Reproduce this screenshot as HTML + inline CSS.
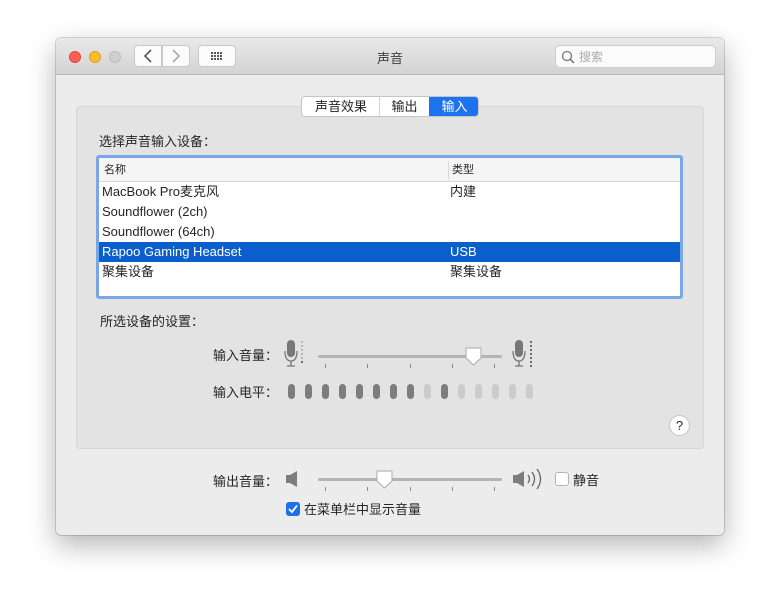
<!DOCTYPE html>
<html><head><meta charset="utf-8"><style>
*{margin:0;padding:0;box-sizing:border-box}
body{width:780px;height:610px;background:#fff;position:relative;overflow:hidden;font-family:"Liberation Sans","Noto Sans CJK SC",sans-serif;font-size:13px;color:#262626}
.a{position:absolute}
.win{left:56px;top:38px;width:668px;height:497px;background:#ececec;border-radius:5px;box-shadow:0 10px 28px rgba(0,0,0,.3),0 0 0 1px rgba(0,0,0,.15)}
.tb{left:0;top:0;width:668px;height:37px;background:linear-gradient(#e9e9e9,#d3d3d3);border-bottom:1px solid #b9b9b9;border-radius:5px 5px 0 0}
.dot{width:12px;height:12px;border-radius:50%;top:13px}
.btn{background:#fbfbfb;border:1px solid #c9c9c9;border-radius:4px;height:22px;top:7px}
.grp{left:20px;top:68px;width:628px;height:343px;background:#e3e3e3;border:1px solid #d6d6d6;border-radius:4px}
.row{position:absolute;left:0;width:584px;height:20px;line-height:20px}
.row span{position:absolute}
.bar{position:absolute;top:384px;width:7px;height:15px;border-radius:4px}
.tick{position:absolute;width:1px;height:4px;background:#888}
</style></head><body>
<div class="a win">
 <div class="a tb">
  <div class="a dot" style="left:13px;background:#fc5f57;border:1px solid #e0443e"></div>
  <div class="a dot" style="left:33px;background:#fdbc2e;border:1px solid #dea123"></div>
  <div class="a dot" style="left:53px;background:#d0d0d0;border:1px solid #bcbcbc"></div>
  <div class="a btn" style="left:78px;width:28px;border-radius:4px 0 0 4px"><svg width="26" height="20"><path d="M16 4 L10 10 L16 16" fill="none" stroke="#555" stroke-width="1.6"/></svg></div>
  <div class="a btn" style="left:106px;width:28px;border-radius:0 4px 4px 0"><svg width="26" height="20"><path d="M10 4 L16 10 L10 16" fill="none" stroke="#aaa" stroke-width="1.6"/></svg></div>
  <div class="a btn" style="left:142px;width:38px"><svg width="36" height="20"><g fill="#555"><rect x="12" y="6" width="2" height="2"/><rect x="15" y="6" width="2" height="2"/><rect x="18" y="6" width="2" height="2"/><rect x="21" y="6" width="2" height="2"/><rect x="12" y="9" width="2" height="2"/><rect x="15" y="9" width="2" height="2"/><rect x="18" y="9" width="2" height="2"/><rect x="21" y="9" width="2" height="2"/><rect x="12" y="12" width="2" height="2"/><rect x="15" y="12" width="2" height="2"/><rect x="18" y="12" width="2" height="2"/><rect x="21" y="12" width="2" height="2"/></g></svg></div>
  <div class="a" style="left:0;width:668px;top:10px;text-align:center;color:#404040">声音</div>
  <div class="a" style="left:499px;top:7px;width:161px;height:23px;background:#fbfbfb;border:1px solid #cdcdcd;border-radius:5px"><svg class="a" style="left:5px;top:4px" width="14" height="14"><circle cx="6" cy="6" r="4.5" fill="none" stroke="#777" stroke-width="1.3"/><path d="M9.3 9.3 L13 13" stroke="#777" stroke-width="1.5"/></svg><span class="a" style="left:23px;top:2px;color:#aaa;font-size:12px">搜索</span></div>
 </div>
 <div class="a grp"></div>
 <div class="a" style="left:245px;top:58px;width:178px;height:21px;background:#fff;border:1px solid #c6c6c6;border-radius:4px;overflow:hidden;line-height:19px">
  <span class="a" style="left:0;width:78px;text-align:center">声音效果</span>
  <span class="a" style="left:77px;top:0;width:1px;height:20px;background:#d4d4d4"></span>
  <span class="a" style="left:78px;width:49px;text-align:center">输出</span>
  <span class="a" style="left:127px;top:-1px;width:51px;height:21px;background:#1d72f0;color:#fff;text-align:center;line-height:21px">输入</span>
 </div>
 <div class="a" style="left:43px;top:93px">选择声音输入设备：</div>
 <div class="a" style="left:40px;top:117px;width:587px;height:144px;border:3px solid #78a6e6;border-radius:3px;background:#fff">
  <div class="a" style="left:0;top:0;width:581px;height:24px;background:#f5f5f5;border-bottom:1px solid #d8d8d8;font-size:11px;line-height:24px"><span class="a" style="left:5px">名称</span><span class="a" style="left:349px;top:3px;width:1px;height:18px;background:#d8d8d8"></span><span class="a" style="left:353px">类型</span></div>
  <div class="row" style="top:24px"><span style="left:3px">MacBook Pro麦克风</span><span style="left:351px">内建</span></div>
  <div class="row" style="top:44px"><span style="left:3px">Soundflower (2ch)</span></div>
  <div class="row" style="top:64px"><span style="left:3px">Soundflower (64ch)</span></div>
  <div class="row" style="top:84px;background:#0a5fcc;color:#fff;width:581px"><span style="left:3px">Rapoo Gaming Headset</span><span style="left:351px">USB</span></div>
  <div class="row" style="top:104px"><span style="left:3px">聚集设备</span><span style="left:351px">聚集设备</span></div>
 </div>
 <div class="a" style="left:44px;top:273px">所选设备的设置：</div>
 <div class="a" style="left:157px;top:307px">输入音量：</div>
 <div class="a" style="left:157px;top:344px">输入电平：</div>
 <div class="a" style="left:157px;top:433px">输出音量：</div>
</div>
<!-- mic icons -->
<svg class="a" style="left:283px;top:339px" width="24" height="30"><rect x="4" y="1" width="8" height="17" rx="4" fill="#777"/><path d="M2 12 Q2 22 8 22 Q14 22 14 12" fill="none" stroke="#777" stroke-width="1.3"/><path d="M8 22 V27 M4 27 H12" stroke="#777" stroke-width="1.3"/><g fill="#aaa"><circle cx="19" cy="3" r="1"/><circle cx="19" cy="7" r="1"/><circle cx="19" cy="11" r="1"/><circle cx="19" cy="15" r="1"/><circle cx="19" cy="19" r="1"/></g><circle cx="19" cy="23" r="1.1" fill="#666"/></svg>
<svg class="a" style="left:511px;top:339px" width="24" height="30"><rect x="4" y="1" width="8" height="17" rx="4" fill="#777"/><path d="M2 12 Q2 22 8 22 Q14 22 14 12" fill="none" stroke="#777" stroke-width="1.3"/><path d="M8 22 V27 M4 27 H12" stroke="#777" stroke-width="1.3"/><g fill="#666"><circle cx="20" cy="3" r="1.1"/><circle cx="20" cy="7" r="1.1"/><circle cx="20" cy="11" r="1.1"/><circle cx="20" cy="15" r="1.1"/><circle cx="20" cy="19" r="1.1"/><circle cx="20" cy="23" r="1.1"/><circle cx="20" cy="27" r="1.1"/></g></svg>
<!-- input slider -->
<div class="a" style="left:318px;top:355px;width:184px;height:3px;background:#b4b4b4;border-radius:2px"></div>
<div class="tick" style="left:325px;top:364px"></div><div class="tick" style="left:367px;top:364px"></div><div class="tick" style="left:410px;top:364px"></div><div class="tick" style="left:452px;top:364px"></div><div class="tick" style="left:494px;top:364px"></div>
<svg class="a" style="left:464px;top:347px" width="19" height="20"><path d="M2 1 H17 V11 L9.5 18 L2 11 Z" fill="#fff" stroke="#aaa"/></svg>
<!-- level bars -->
<div class="bar" style="left:288px;background:#7d7d7d"></div><div class="bar" style="left:305px;background:#7d7d7d"></div><div class="bar" style="left:322px;background:#7d7d7d"></div><div class="bar" style="left:339px;background:#7d7d7d"></div><div class="bar" style="left:356px;background:#7d7d7d"></div><div class="bar" style="left:373px;background:#7d7d7d"></div><div class="bar" style="left:390px;background:#7d7d7d"></div><div class="bar" style="left:407px;background:#7d7d7d"></div><div class="bar" style="left:424px;background:#cbcbcb"></div><div class="bar" style="left:441px;background:#7d7d7d"></div><div class="bar" style="left:458px;background:#cbcbcb"></div><div class="bar" style="left:475px;background:#cbcbcb"></div><div class="bar" style="left:492px;background:#cbcbcb"></div><div class="bar" style="left:509px;background:#cbcbcb"></div><div class="bar" style="left:526px;background:#cbcbcb"></div>
<div class="a" style="left:669px;top:415px;width:21px;height:21px;border-radius:50%;background:#fff;border:1px solid #c4c4c4;text-align:center;line-height:19px;font-size:13px">?</div>
<!-- output -->
<svg class="a" style="left:285px;top:470px" width="16" height="18"><path d="M1 5 H5 L12 1 V17 L5 13 H1 Z" fill="#7d7d7d"/></svg>
<div class="a" style="left:318px;top:478px;width:184px;height:3px;background:#b4b4b4;border-radius:2px"></div>
<div class="tick" style="left:325px;top:487px"></div><div class="tick" style="left:367px;top:487px"></div><div class="tick" style="left:410px;top:487px"></div><div class="tick" style="left:452px;top:487px"></div><div class="tick" style="left:494px;top:487px"></div>
<svg class="a" style="left:375px;top:470px" width="19" height="20"><path d="M2 1 H17 V11 L9.5 18 L2 11 Z" fill="#fff" stroke="#aaa"/></svg>
<svg class="a" style="left:512px;top:466px" width="34" height="26"><path d="M1 9 H5 L12 5 V21 L5 17 H1 Z" fill="#7d7d7d"/><path d="M16 9 Q19 13 16 17 M20 6 Q25 13 20 20 M25 3 Q32 13 25 23" fill="none" stroke="#666" stroke-width="1.3"/></svg>
<div class="a" style="left:555px;top:472px;width:14px;height:14px;background:#fff;border:1px solid #b5b5b5;border-radius:3px"></div>
<div class="a" style="left:573px;top:470px">静音</div>
<div class="a" style="left:286px;top:502px;width:14px;height:14px;background:#1f6fe6;border-radius:3px"><svg width="14" height="14"><path d="M3 7 L6 10 L11 3.5" fill="none" stroke="#fff" stroke-width="1.8"/></svg></div>
<div class="a" style="left:304px;top:499px">在菜单栏中显示音量</div>
</body></html>
